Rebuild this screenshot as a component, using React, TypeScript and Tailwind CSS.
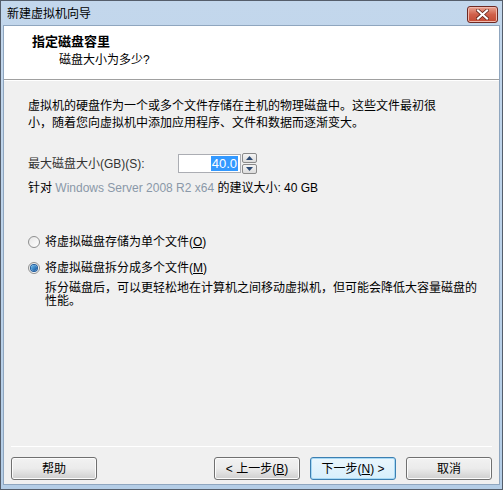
import React from "react";

const font = { fontFamily: '"Liberation Sans", "Noto Sans CJK SC", sans-serif' };

function Radio({ checked }: { checked?: boolean }) {
  return (
    <span className="flex h-[12px] w-[12px] items-center justify-center rounded-full border border-[#8e8f8f] bg-gradient-to-br from-[#e6e6e6] to-[#ffffff]">
      {checked && (
        <span className="h-[6px] w-[6px] rounded-full bg-gradient-to-br from-[#6fc0f0] to-[#0c4f9a] ring-1 ring-[#1d5a9c]" />
      )}
    </span>
  );
}

function Btn({ children, focus }: { children: React.ReactNode; focus?: boolean }) {
  return (
    <button
      className={`flex h-[23px] w-[86px] items-center justify-center rounded-[3px] border text-[12px] text-black ${
        focus
          ? "border-[#3c7fb1] bg-gradient-to-b from-[#eaf6fd] to-[#d7effc] shadow-[inset_0_0_0_1px_#a7d9f5]"
          : "border-[#707070] bg-gradient-to-b from-[#f2f2f2] via-[#ebebeb] to-[#cfcfcf] shadow-[inset_0_0_0_1px_#fcfcfc]"
      }`}
    >
      {children}
    </button>
  );
}

export default function App() {
  return (
    <div style={font} className="flex h-[490px] w-[503px] flex-col border border-[#555e6b] bg-gradient-to-b from-[#c3d7ec] to-[#b4cde6] text-[12px] text-black">
      {/* Title bar */}
      <div className="flex h-[24px] shrink-0 items-center justify-between pl-[6px] pr-[4px]">
        <span className="pt-[2px]">新建虚拟机向导</span>
        <div className="mt-[2px] flex h-[17px] w-[31px] items-center justify-center rounded-[3px] border border-[#6d2a24] bg-gradient-to-b from-[#e8a493] via-[#d0604a] to-[#c34a33] shadow-[inset_0_0_0_1px_#f1b9ad]">
          <svg width="13" height="11" viewBox="0 0 13 11">
            <path d="M2 1.5 L11 9.5 M11 1.5 L2 9.5" stroke="#5a1d14" strokeWidth="3.6" strokeLinecap="square" />
            <path d="M2 1.5 L11 9.5 M11 1.5 L2 9.5" stroke="#ffffff" strokeWidth="2.2" strokeLinecap="square" />
          </svg>
        </div>
      </div>

      {/* Client area */}
      <div className="mx-[2px] mb-[4px] flex flex-1 flex-col border border-[#8fa6bf] bg-[#f0f0f0]">
        {/* Header */}
        <div className="flex h-[54px] shrink-0 flex-col border-b border-[#a0a0a0] bg-white pl-[28px] pt-[7px]">
          <span className="text-[13px] font-bold leading-[18px]">指定磁盘容里</span>
          <span className="pl-[27px] leading-[18px]">磁盘大小为多少?</span>
        </div>
        <div className="h-px bg-white" />

        {/* Body */}
        <div className="flex flex-1 flex-col pl-[24px] pt-[17px]">
          <p className="leading-[17px]">
            虚拟机的硬盘作为一个或多个文件存储在主机的物理磁盘中。这些文件最初很
            <br />
            小，随着您向虚拟机中添加应用程序、文件和数据而逐渐变大。
          </p>

          <div className="mt-[21px] flex items-center">
            <span className="w-[150px] text-[#333]">最大磁盘大小(GB)(S):</span>
            <div className="flex h-[19px] w-[63px] items-center justify-end border border-[#abadb3] bg-white pr-[2px]">
              <span className="bg-[#3399ff] px-[1px] text-[13px] leading-[15px] text-white">40.0</span>
            </div>
            <div className="ml-[1px] flex h-[21px] w-[15px] flex-col gap-px">
              <div className="flex flex-1 items-center justify-center rounded-[2px] border border-[#8a8a8a] bg-gradient-to-b from-[#f4f4f4] to-[#dcdcdc]">
                <svg width="7" height="4" viewBox="0 0 7 4"><path d="M0 4 L3.5 0 L7 4Z" fill="#2c4a73" /></svg>
              </div>
              <div className="flex flex-1 items-center justify-center rounded-[2px] border border-[#8a8a8a] bg-gradient-to-b from-[#f4f4f4] to-[#dcdcdc]">
                <svg width="7" height="4" viewBox="0 0 7 4"><path d="M0 0 L3.5 4 L7 0Z" fill="#2c4a73" /></svg>
              </div>
            </div>
          </div>

          <p className="mt-[6px] leading-[17px]">
            针对 <span className="text-[#8a98a8]">Windows Server 2008 R2 x64</span> 的建议大小: 40 GB
          </p>

          <div className="mt-[36px] flex items-center gap-[5px]">
            <Radio />
            <span>
              将虚拟磁盘存储为单个文件(<span className="underline">O</span>)
            </span>
          </div>
          <div className="mt-[8px] flex items-center gap-[5px]">
            <Radio checked />
            <span>
              将虚拟磁盘拆分成多个文件(<span className="underline">M</span>)
            </span>
          </div>
          <p className="mt-[5px] pl-[17px] leading-[13px]">
            拆分磁盘后，可以更轻松地在计算机之间移动虚拟机，但可能会降低大容量磁盘的
            <br />
            性能。
          </p>
        </div>

        {/* Footer */}
        <div className="mx-[7px] h-px shrink-0 border-b border-white bg-[#a0a0a0]" />
        <div className="flex h-[37px] shrink-0 items-start justify-between px-[7px] pt-[10px]">
          <Btn>帮助</Btn>
          <div className="flex gap-[10px]">
            <Btn>
              &lt; 上一步(<span className="underline">B</span>)
            </Btn>
            <Btn focus>
              下一步(<span className="underline">N</span>) &gt;
            </Btn>
            <Btn>取消</Btn>
          </div>
        </div>
      </div>
    </div>
  );
}
